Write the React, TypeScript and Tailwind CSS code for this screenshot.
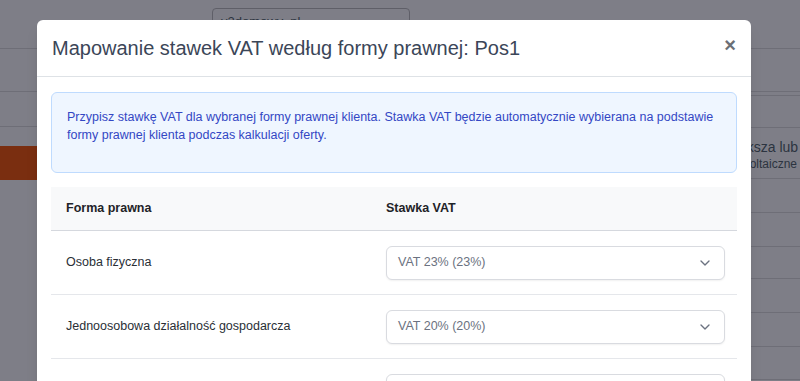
import { ChevronDown } from "lucide-react";

const rows = [
  { name: "Osoba fizyczna", vat: "VAT 23% (23%)" },
  { name: "Jednoosobowa działalność gospodarcza", vat: "VAT 20% (20%)" },
  { name: "Spółka cywilna", vat: "VAT 8% (8%)" },
];

function BackdropPage() {
  return (
    <div className="absolute inset-0 flex bg-[#7e7e87]">
      <div className="flex w-[212px] flex-col">
        <div className="h-[49px] border-b border-[#6e6e77]" />
        <div className="h-[43px] border-b border-[#6e6e77]" />
        <div className="h-[35px] border-b border-[#6e6e77]" />
        <div className="h-[19px]" />
        <div className="h-[34px] bg-[#7a2e10]" />
      </div>
      <div className="flex-1 pt-[8px]">
        <div className="h-[24px] w-[198px] rounded border border-[#5f5f68] px-2 pt-[6px] text-[13px] leading-none text-[#2c3440]">
          v2domowy_pl
        </div>
      </div>
      <div className="flex w-[49px] flex-col">
        <div className="h-[49px] border-b border-[#6e6e77]" />
        <div className="h-[43px] border-b border-[#6e6e77]" />
        <div className="h-[4px] border-b border-[#6e6e77]" />
        <div className="h-[32px] border-b border-[#6e6e77]" />
        <div className="h-[51px] overflow-hidden border-b border-[#6e6e77] pt-[10px] whitespace-nowrap">
          <div className="-ml-[12px] text-[14px] leading-[18px] text-[#2c3440]">ększa lub</div>
          <div className="-ml-[10px] text-[12px] leading-[16px] text-[#2c3440]">woltaiczne</div>
        </div>
        <div className="h-[34px] border-b border-[#6e6e77]" />
        <div className="h-[34px] border-b border-[#6e6e77]" />
        <div className="h-[32px] border-b border-[#6e6e77]" />
        <div className="h-[34px] border-b border-[#6e6e77]" />
        <div className="h-[34px] border-b border-[#6e6e77]" />
        <div className="h-[33px] border-b border-[#6e6e77]" />
      </div>
    </div>
  );
}

function VatSelect({ value }: { value: string }) {
  return (
    <div className="mt-px flex h-[34px] items-center justify-between rounded-md border border-[#d9dbe0] bg-white px-[11px] shadow-[0_1px_2px_rgba(0,0,0,0.06)]">
      <span className="text-[12.5px] text-[#6b7280]">{value}</span>
      <ChevronDown className="h-4 w-4 text-[#6b7280]" strokeWidth={2} />
    </div>
  );
}

export default function App() {
  return (
    <div
      className="relative h-[381px] w-full overflow-hidden"
      style={{ fontFamily: '"Liberation Sans", Arial, sans-serif' }}
    >
      <BackdropPage />
      <div className="absolute top-[20px] left-[37px] w-[714px] rounded-t-md bg-white shadow-lg">
        <div className="flex h-[57px] items-center justify-between border-b border-[#dee2e6] px-[15px]">
          <h2 className="text-[20px] leading-none text-[#3b4658]">
            Mapowanie stawek VAT według formy prawnej: Pos1
          </h2>
          <span className="-mt-[7px] text-[20px] leading-none font-bold text-[#6b6f76]">×</span>
        </div>
        <div className="px-[14px] pt-[15px]">
          <div className="rounded-md border border-[#bfdbfe] bg-[#eff6ff] px-[15px] pt-[15px] pb-[28px] text-[12.5px] leading-[18px] text-[#3347c4]">
            Przypisz stawkę VAT dla wybranej formy prawnej klienta. Stawka VAT będzie automatycznie wybierana na podstawie
            formy prawnej klienta podczas kalkulacji oferty.
          </div>
          <table className="mt-[14px] w-full border-collapse text-[12.5px]">
            <thead>
              <tr className="h-[43px] border-b border-[#d5d8de] bg-[#f8f9fa] text-left">
                <th className="w-[320px] pl-[15px] font-bold text-[#1f2328]">Forma prawna</th>
                <th className="pl-[15px] font-bold text-[#1f2328]">Stawka VAT</th>
              </tr>
            </thead>
            <tbody>
              {rows.map((r) => (
                <tr key={r.name} className="border-b border-[#e5e7eb]">
                  <td className="h-[64px] pl-[15px] text-[#2a2f36]">{r.name}</td>
                  <td className="pr-[12px] pl-[15px]">
                    <VatSelect value={r.vat} />
                  </td>
                </tr>
              ))}
            </tbody>
          </table>
        </div>
      </div>
    </div>
  );
}
